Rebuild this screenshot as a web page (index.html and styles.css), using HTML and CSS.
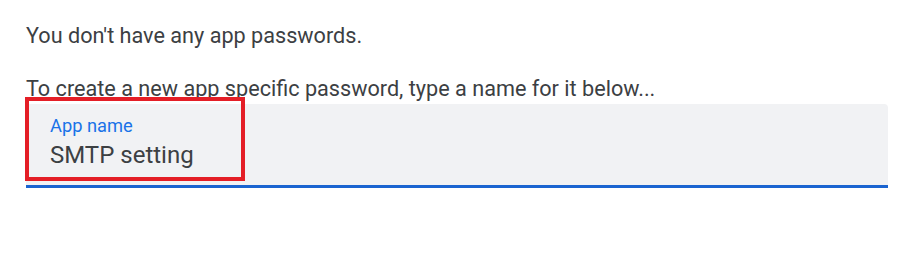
FILE: index.html
```html
<!DOCTYPE html>
<html>
<head>
<meta charset="utf-8">
<link rel="stylesheet" href="styles.css">
</head>
<body>
<div class="page">
  <p class="msg">You don't have any app passwords.</p>
  <p class="msg hint">To create a new app specific password, type a name for it below...</p>
  <div class="field-wrap">
    <div class="field">
      <label class="label">App name</label>
      <div class="value">SMTP setting</div>
    </div>
    <div class="highlight"></div>
  </div>
</div>
</body>
</html>
```
FILE: styles.css
```css
html, body {
  margin: 0;
  padding: 0;
  background: #ffffff;
}
.page {
  padding: 23px 24px 0 26px;
  font-family: Roboto, "Noto Sans", sans-serif;
  color: #3c4043;
}
.msg {
  margin: 0;
  font-size: 21.65px;
  line-height: 26px;
}
.hint {
  margin-top: 27px;
}
.field-wrap {
  position: relative;
  width: 862px;
  margin-top: 2px;
}
.field {
  background: #f1f2f4;
  border-radius: 4px 4px 0 0;
  border-bottom: 3px solid #1a64d0;
  height: 84px;
  box-sizing: border-box;
  padding: 12px 24px 0 24px;
}
.label {
  display: block;
  color: #1a73e8;
  font-size: 18.3px;
  line-height: 20px;
}
.value {
  font-size: 24px;
  line-height: 30px;
  margin-top: 4px;
  color: #3c4043;
}
.highlight {
  position: absolute;
  left: -1px;
  top: -7px;
  width: 220px;
  height: 84px;
  box-sizing: border-box;
  border: 4px solid #e41e26;
}
```
